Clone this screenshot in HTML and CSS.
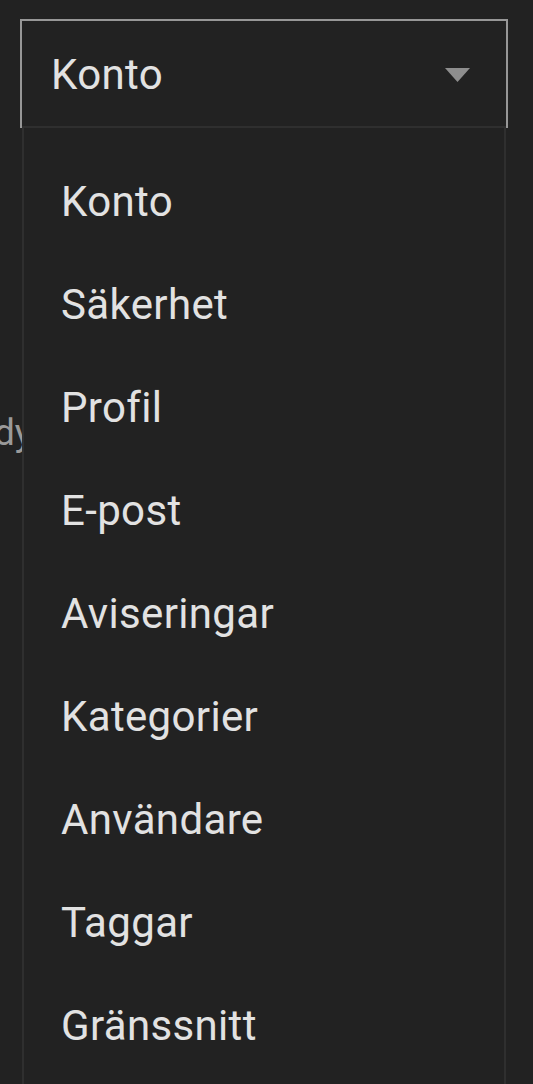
FILE: index.html
```html
<!DOCTYPE html>
<html lang="sv">
<head>
<meta charset="utf-8">
<link rel="stylesheet" href="styles.css">
</head>
<body>
<div class="page">
  <div class="select">
    <span class="select-value">Konto</span>
    <svg class="select-arrow" width="25" height="14" viewBox="0 0 25 14"><path d="M0 0 H25 L12.5 14 Z" fill="#8e8e8e"/></svg>
  </div>
  <p class="bg-text">dy</p>
  <ul class="menu">
    <li class="menu-item">Konto</li>
    <li class="menu-item">Säkerhet</li>
    <li class="menu-item">Profil</li>
    <li class="menu-item">E-post</li>
    <li class="menu-item">Aviseringar</li>
    <li class="menu-item">Kategorier</li>
    <li class="menu-item">Användare</li>
    <li class="menu-item">Taggar</li>
    <li class="menu-item">Gränssnitt</li>
  </ul>
</div>
</body>
</html>
```
FILE: styles.css
```css
html, body {
  margin: 0;
  padding: 0;
  background: #222222;
  height: 100%;
  overflow: hidden;
}
.page {
  position: relative;
  height: 1084px;
  font-family: Roboto, "Noto Sans", sans-serif;
  padding-top: 19px;
  box-sizing: border-box;
}
.select {
  margin-left: 20px;
  width: 488px;
  height: 109px;
  box-sizing: border-box;
  border: 2px solid #979797;
  display: flex;
  align-items: center;
  justify-content: space-between;
  padding: 0 36px 0 29px;
}
.select-value {
  font-size: 42px;
  letter-spacing: 0.35px;
  color: #e2e2e2;
  line-height: 50px;
  margin-top: 2px;
}
.select-arrow {
  display: block;
  margin-top: 3px;
}
.bg-text {
  margin: 283px 0 0 -6px;
  font-size: 37px;
  color: #9a9a9a;
}
.menu {
  position: absolute;
  left: 22px;
  top: 126px;
  width: 484px;
  height: 1000px;
  box-sizing: border-box;
  margin: 0;
  padding: 22px 0 0 0;
  list-style: none;
  background: #222222;
  border: 2px solid #2f2f2f;
}
.menu-item {
  height: 103px;
  line-height: 103px;
  font-size: 42px;
  letter-spacing: 0.35px;
  color: #e2e2e2;
  padding-left: 37px;
}
```
